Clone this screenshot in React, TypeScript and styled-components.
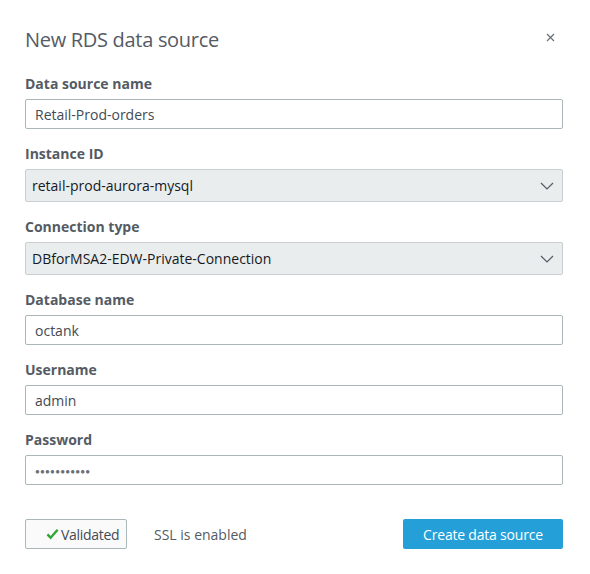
import React, { FC } from 'react'
import styled, { createGlobalStyle } from 'styled-components'

const GlobalStyle = createGlobalStyle`
    body {
        margin: 0;
        background: #ffffff;
        font-family: 'Open Sans', 'Liberation Sans', sans-serif;
    }
`

const Modal = styled.div`
    width: 590px;
    height: 574px;
    box-sizing: border-box;
    padding: 28px 27px 0 25px;
    background: #ffffff;
`

const Header = styled.div`
    display: flex;
    align-items: center;
    justify-content: space-between;
    height: 24px;
    margin-bottom: 23px;
`

const Title = styled.h2`
    margin: 0;
    font-size: 20px;
    font-weight: 400;
    line-height: 24px;
    color: #545b64;
    letter-spacing: -0.3px;
`

const Close = styled.button`
    border: none;
    background: none;
    padding: 0;
    margin-right: 8px;
    width: 10px;
    height: 10px;
    display: flex;
    align-items: center;
    justify-content: center;
    cursor: pointer;
    margin-top: -6px;
`

const Field = styled.div`
    display: flex;
    flex-direction: column;
    gap: 6px;
    margin-bottom: 16px;
`

const Label = styled.label`
    font-size: 14px;
    font-weight: 700;
    line-height: 18px;
    color: #545b64;
`

const TextBox = styled.div`
    box-sizing: border-box;
    height: 30px;
    border: 1px solid #aab7b8;
    border-radius: 2px;
    background: #ffffff;
    display: flex;
    align-items: center;
    padding: 0 9px;
    font-size: 14px;
    color: #444b54;
`

const Dots = styled.span`
    font-size: 8px;
    letter-spacing: 0.2px;
    color: #687078;
`

const Select = styled.div`
    box-sizing: border-box;
    height: 33px;
    border: 1px solid #c9cfd1;
    border-radius: 2px;
    background: #eaeded;
    display: flex;
    align-items: center;
    justify-content: space-between;
    padding: 0 8px 0 6px;
    font-size: 14px;
    color: #16191f;
`

const Footer = styled.div`
    display: flex;
    align-items: center;
    margin-top: 34px;
`

const ValidatedButton = styled.button`
    box-sizing: border-box;
    height: 30px;
    width: 102px;
    border: 1px solid #aab7b8;
    border-radius: 2px;
    background: #fafafa;
    display: flex;
    align-items: center;
    justify-content: flex-start;
    gap: 2px;
    font-family: inherit;
    font-size: 14px;
    letter-spacing: -0.3px;
    color: #444b54;
    padding: 0 0 0 20px;
`

const Status = styled.span`
    margin-left: 27px;
    font-size: 14px;
    color: #545b64;
`

const PrimaryButton = styled.button`
    margin-left: auto;
    box-sizing: border-box;
    height: 30px;
    width: 160px;
    border: none;
    border-radius: 2px;
    background: #249fd8;
    color: #ffffff;
    font-family: inherit;
    font-size: 14px;
    letter-spacing: -0.2px;
    padding: 0;
`

const Chevron: FC = () => (
    <svg width="14" height="8" viewBox="0 0 14 8">
        <path d="M1 1 L7 7 L13 1" fill="none" stroke="#545b64" strokeWidth="1.2" />
    </svg>
)

const fields = [
    { label: 'Data source name', value: 'Retail-Prod-orders', kind: 'text' },
    { label: 'Instance ID', value: 'retail-prod-aurora-mysql', kind: 'select' },
    { label: 'Connection type', value: 'DBforMSA2-EDW-Private-Connection', kind: 'select' },
    { label: 'Database name', value: 'octank', kind: 'text' },
    { label: 'Username', value: 'admin', kind: 'text' },
    { label: 'Password', value: '', kind: 'password' },
]

const App: FC = () => {
    return (
        <Modal>
            <GlobalStyle />
            <Header>
                <Title>New RDS data source</Title>
                <Close aria-label="Close">
                    <svg width="9" height="9" viewBox="0 0 9 9">
                        <path d="M1 1 L8 8 M8 1 L1 8" stroke="#687078" strokeWidth="1.2" />
                    </svg>
                </Close>
            </Header>
            {fields.map((f) => (
                <Field key={f.label}>
                    <Label>{f.label}</Label>
                    {f.kind === 'select' ? (
                        <Select>
                            <span>{f.value}</span>
                            <Chevron />
                        </Select>
                    ) : (
                        <TextBox>
                            {f.kind === 'password' ? <Dots>●●●●●●●●●●●</Dots> : f.value}
                        </TextBox>
                    )}
                </Field>
            ))}
            <Footer>
                <ValidatedButton>
                    <svg width="13" height="12" viewBox="0 0 14 12">
                        <path d="M1.5 6.5 L5 10 L12.5 1.5" fill="none" stroke="#2ea836" strokeWidth="2.6" />
                    </svg>
                    Validated
                </ValidatedButton>
                <Status>SSL is enabled</Status>
                <PrimaryButton>Create data source</PrimaryButton>
            </Footer>
        </Modal>
    )
}

export default App
